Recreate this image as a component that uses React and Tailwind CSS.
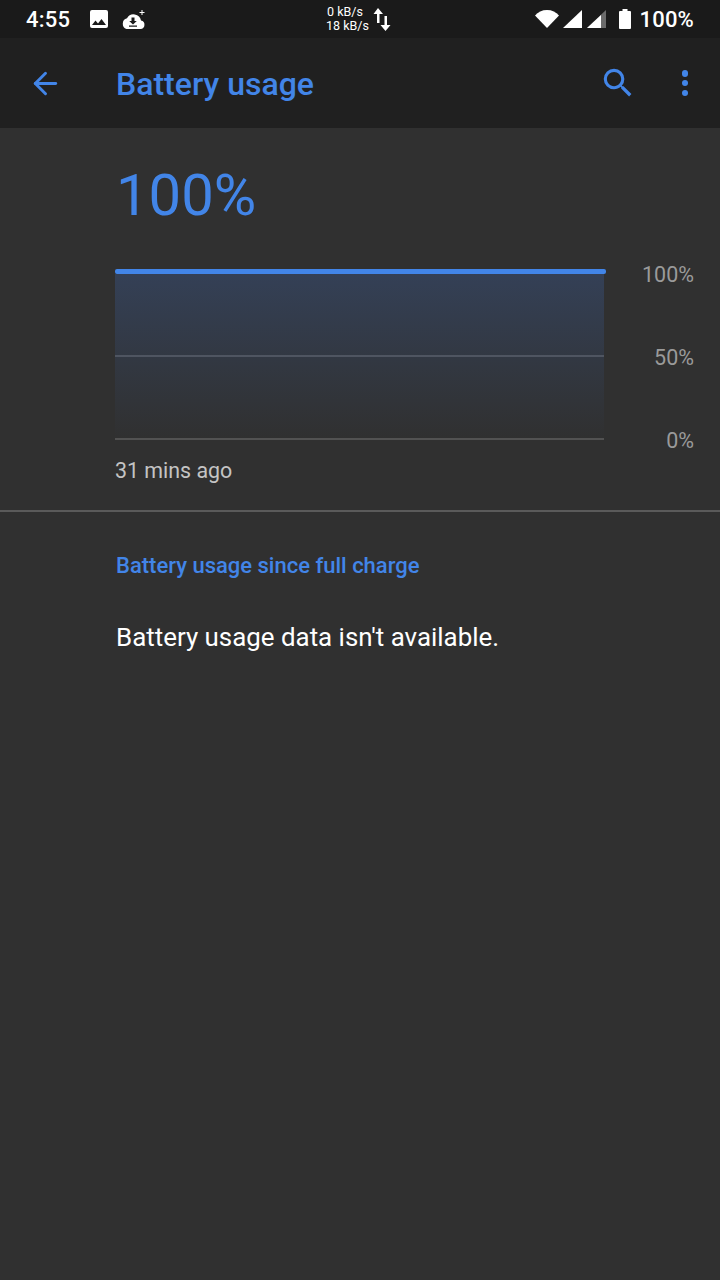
import { ArrowLeft } from "lucide-react";

function StatusBar() {
  return (
    <div className="h-[38px] bg-[#1a1a1a] flex items-center text-white pl-[26px] pr-[26px] pt-[2px]">
      <span className="text-[22px] leading-none font-medium w-[46px] tracking-[0.2px]">4:55</span>
      <svg className="ml-[15px] -mt-[2px]" width="24" height="24" viewBox="0 0 24 24" fill="#fff">
        <path d="M21 19V5a2 2 0 0 0-2-2H5a2 2 0 0 0-2 2v14a2 2 0 0 0 2 2h14a2 2 0 0 0 2-2zM8.500 13.500l2.500 3 3.500-4.500 4.500 6H5l3.500-4.500z" />
      </svg>
      <svg className="ml-[10px]" width="24" height="22" viewBox="0 0 24 22" fill="#fff">
        <path d="M20 11.500A7.500 7.500 0 0 0 6 9.300 5.600 5.600 0 0 0 5.500 20h14a4.300 4.300 0 0 0 .5-8.500z" />
        <path d="M10.500 8.500h3v3.500h2.300L12 15.500 8.200 12h2.300zM8 16.500h8v1.200H8z" fill="#1a1a1a" />
        <path d="M20.500 1h1v2h2v1h-2v2h-1V4h-2V3h2z" />
      </svg>
      <div className="ml-[181px] w-[48px] flex flex-col items-start text-[12.500px] leading-[14px] text-white -mt-[2px]">
        <span className="pl-[1px]">0 kB/s</span>
        <span>18 kB/s</span>
      </div>
      <svg className="-ml-[1px] -mt-[2px]" width="18" height="24" viewBox="0 0 18 24" fill="#fff">
        <path d="M5.500 1L10.500 7H7v9H4.500V7H1zM12 9h2.500v9H18l-5 6-5-6h4z" transform="translate(-0.500 0)" />
      </svg>
      <div className="flex-1" />
      <svg className="-mt-[2px]" width="26" height="20" viewBox="0 0 26 20" fill="#fff">
        <path d="M13 19L1 6.500C4 3 8 1 13 1s9 2 12 5.500z" />
      </svg>
      <svg className="ml-[2px] -mt-[2px]" width="21" height="20" viewBox="0 0 21 20" fill="#fff">
        <path d="M1 19L20 1v18z" />
      </svg>
      <svg className="ml-[3px] -mt-[2px]" width="21" height="20" viewBox="0 0 21 20">
        <path d="M1 19L20 1v18z" fill="#6b6b6b" />
        <path d="M1 19L15 6v13z" fill="#fff" />
      </svg>
      <svg className="ml-[12px] -mt-[2px]" width="12" height="20" viewBox="0 0 12 20" fill="#fff">
        <path d="M3.500 0h5v2H11a1 1 0 0 1 1 1v16a1 1 0 0 1-1 1H1a1 1 0 0 1-1-1V3a1 1 0 0 1 1-1h2.500z" />
      </svg>
      <span className="ml-[8px] text-[22px] leading-none font-medium tracking-[0.2px]">100%</span>
    </div>
  );
}

function Toolbar() {
  return (
    <div className="h-[90px] bg-[#202020] flex items-center text-[#4285e8]">
      <div className="w-[116px] pl-[28px] flex items-center">
        <ArrowLeft size={35} strokeWidth={2} />
      </div>
      <h1 className="text-[32px] font-medium leading-none mt-[1px]">Battery usage</h1>
      <div className="flex-1" />
      <svg className="mr-[45px]" width="38" height="38" viewBox="0 0 24 24" fill="#4285e8">
        <path d="M15.500 14h-.79l-.28-.27A6.471 6.471 0 0 0 16 9.500 6.500 6.500 0 1 0 9.500 16c1.610 0 3.090-.59 4.230-1.570l.27.28v.79l5 4.990L20.490 19l-4.990-5zm-6 0C7.010 14 5 11.990 5 9.500S7.010 5 9.500 5 14 7.010 14 9.500 11.990 14 9.500 14z" />
      </svg>
      <div className="flex flex-col gap-[3.250px] mr-[32px]">
        <span className="w-[6.500px] h-[6.500px] rounded-full bg-[#4285e8]" />
        <span className="w-[6.500px] h-[6.500px] rounded-full bg-[#4285e8]" />
        <span className="w-[6.500px] h-[6.500px] rounded-full bg-[#4285e8]" />
      </div>
    </div>
  );
}

function Chart() {
  return (
    <div className="flex mt-[43px] ml-[115px] mr-[26px] justify-between">
      <div className="w-[491px]">
        <div className="h-[5px] bg-[#4285e8] rounded-[2px]" />
        <div className="w-[489px] bg-gradient-to-b from-[#344056] to-[#303030]">
          <div className="h-[83px] border-b-2 border-[#4f5561]" />
          <div className="h-[83px] border-b-2 border-[#525252]" />
        </div>
        <p className="mt-[19px] text-[21.400px] leading-[24px] text-[#c4c4c4]">31 mins ago</p>
      </div>
      <div className="flex flex-col justify-between items-end h-[190px] -mt-[6px] text-[21.500px] leading-[24px] text-[#9a9a9a]">
        <span>100%</span>
        <span>50%</span>
        <span>0%</span>
      </div>
    </div>
  );
}

export default function App() {
  return (
    <div className="w-[720px] h-[1280px] bg-[#303030] overflow-hidden font-['Roboto',sans-serif]">
      <StatusBar />
      <Toolbar />
      <p className="mt-[36px] ml-[116px] text-[58px] leading-[62px] text-[#4285e8]">100%</p>
      <Chart />
      <div className="mt-[27px] h-[2px] bg-[#5a5a5a]" />
      <h2 className="mt-[41px] ml-[116px] text-[22px] leading-[26px] font-medium text-[#4285e8]">
        Battery usage since full charge
      </h2>
      <p className="mt-[43px] ml-[116px] text-[25.900px] leading-[30px] text-white">
        Battery usage data isn't available.
      </p>
    </div>
  );
}
